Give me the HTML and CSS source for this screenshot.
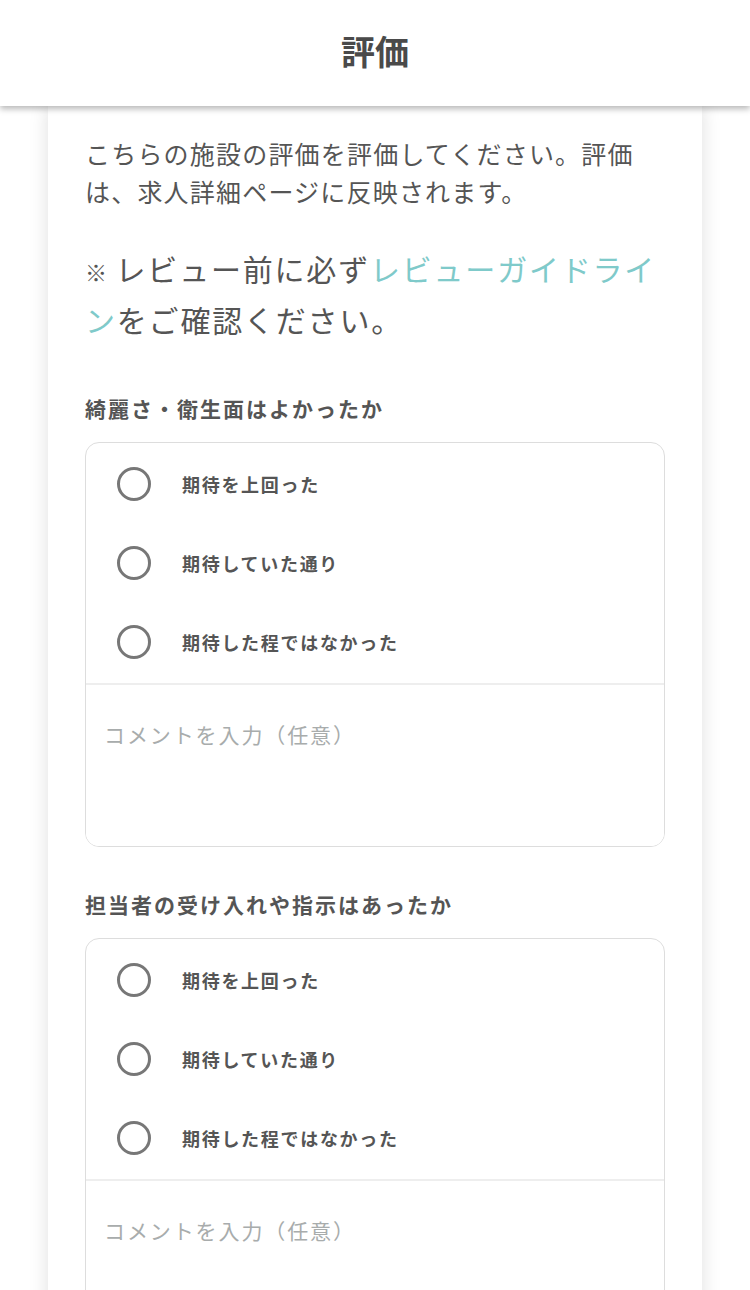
FILE: index.html
```html
<!DOCTYPE html>
<html lang="ja">
<head>
  <meta charset="utf-8">
  <meta name="viewport" content="width=device-width, initial-scale=1">
  <title>評価</title>
  <link rel="stylesheet" href="styles.css">
</head>
<body>
  <header class="header">
    <h1 class="header-title">評価</h1>
  </header>

  <main class="card">
    <p class="intro">こちらの施設の評価を評価してください。評価は、求人詳細ページに反映されます。</p>
    <p class="notice"><span class="notice-mark">※</span> レビュー前に必ず<a href="#" class="notice-link">レビューガイドライン</a>をご確認ください。</p>

    <!-- 質問1 -->
    <section class="question">
      <h2 class="question-title">綺麗さ・衛生面はよかったか</h2>
      <div class="answer-box">
        <div class="options">
          <label class="option"><input type="radio" name="q1"><span>期待を上回った</span></label>
          <label class="option"><input type="radio" name="q1"><span>期待していた通り</span></label>
          <label class="option"><input type="radio" name="q1"><span>期待した程ではなかった</span></label>
        </div>
        <textarea class="comment" placeholder="コメントを入力（任意）"></textarea>
      </div>
    </section>

    <!-- 質問2 -->
    <section class="question">
      <h2 class="question-title">担当者の受け入れや指示はあったか</h2>
      <div class="answer-box">
        <div class="options">
          <label class="option"><input type="radio" name="q2"><span>期待を上回った</span></label>
          <label class="option"><input type="radio" name="q2"><span>期待していた通り</span></label>
          <label class="option"><input type="radio" name="q2"><span>期待した程ではなかった</span></label>
        </div>
        <textarea class="comment" placeholder="コメントを入力（任意）"></textarea>
      </div>
    </section>
  </main>
</body>
</html>
```

FILE: styles.css
```css
* {
  box-sizing: border-box;
}

body {
  margin: 0;
  padding: 0;
  background: #fff;
  font-family: "Noto Sans CJK JP", "Noto Sans", sans-serif;
  color: #555;
}

.header {
  position: relative;
  z-index: 2;
  height: 106px;
  padding-bottom: 6px;
  background: #fff;
  box-shadow: 0 3px 6px rgba(0, 0, 0, 0.28);
  display: flex;
  align-items: center;
  justify-content: center;
}

.header-title {
  margin: 0;
  font-size: 34px;
  font-weight: bold;
  color: #4a4a4a;
}

.card {
  margin: 0 48px;
  min-height: 1300px;
  padding: 28px 37px 40px;
  background: #fff;
  box-shadow: 0 0 18px rgba(0, 0, 0, 0.13);
}

.intro {
  margin: 0;
  font-size: 25px;
  line-height: 38px;
  letter-spacing: 1.2px;
}

.notice {
  margin: 34px 0 0;
  font-size: 30px;
  line-height: 48px;
  letter-spacing: 1.8px;
}

.notice-mark {
  font-size: 22px;
  font-weight: bold;
  letter-spacing: 0;
}

.notice-link {
  color: #7fcaca;
  text-decoration: none;
}

.question {
  margin-top: 50px;
}

.question + .question {
  margin-top: 42px;
}

.question-title {
  margin: 0 0 19px;
  font-size: 21px;
  line-height: 30px;
  font-weight: bold;
  letter-spacing: 2px;
}

.answer-box {
  border: 1px solid #ddd;
  border-radius: 14px;
  overflow: hidden;
}

.options {
  padding: 1px 0 2px;
  border-bottom: 2px solid #eee;
}

.option {
  display: flex;
  align-items: center;
  height: 79px;
  padding-left: 31px;
  font-size: 18px;
  font-weight: bold;
  letter-spacing: 1.7px;
  cursor: pointer;
}

.option input {
  appearance: none;
  -webkit-appearance: none;
  margin: 0 31px 0 0;
  width: 34px;
  height: 34px;
  border: 3.5px solid #777;
  border-radius: 50%;
  flex-shrink: 0;
}

.comment {
  display: block;
  width: 100%;
  height: 161px;
  border: none;
  resize: none;
  padding: 35px 18px;
  font-family: inherit;
  font-size: 21px;
  line-height: 28px;
  letter-spacing: 1.9px;
  color: #555;
  outline: none;
}

.comment::placeholder {
  color: #a8acac;
}
```
